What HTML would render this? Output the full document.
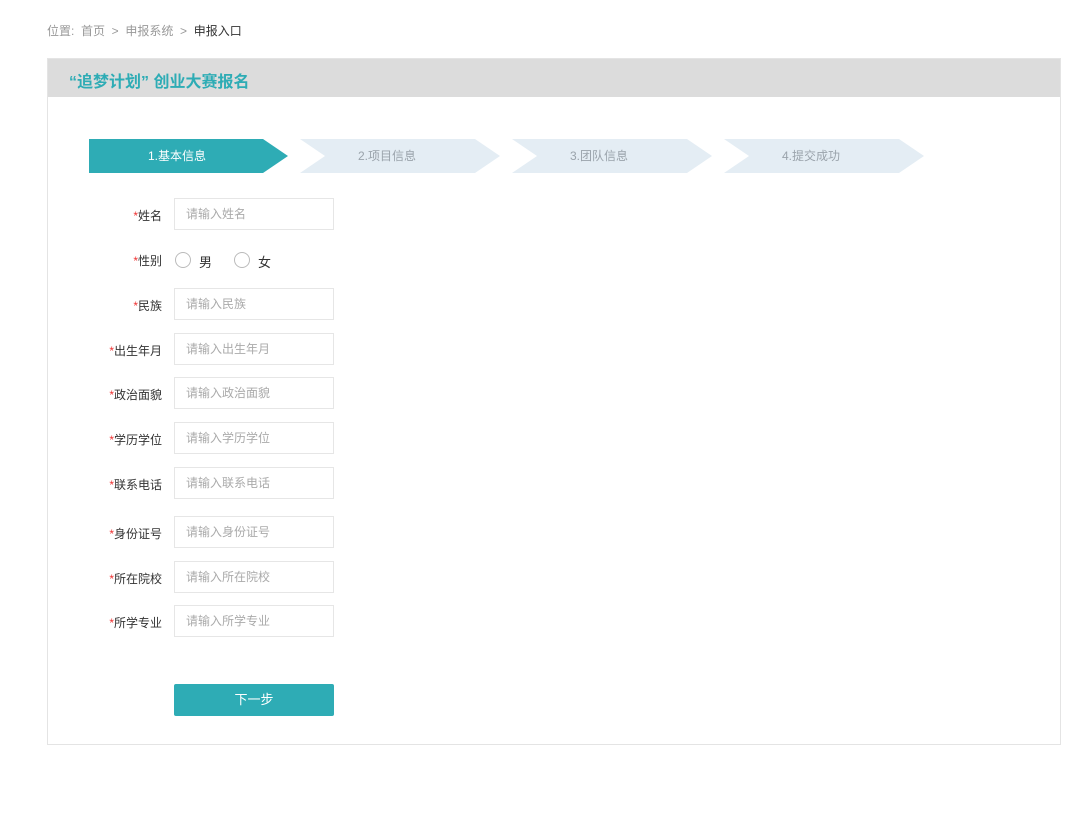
<!DOCTYPE html>
<html><head><meta charset="utf-8"><style>
body{margin:0;width:1080px;height:816px;background:#fff;font-family:"Liberation Sans","Noto Sans CJK SC",sans-serif;position:relative;overflow:hidden}
.a{position:absolute}
.crumb{left:47px;top:22px;font-size:12px;color:#999}
.crumb b{font-weight:normal;color:#333}
.panel{left:47px;top:58px;width:1014px;height:687px;border:1px solid #e4e4e4;box-sizing:border-box}
.head{left:48px;top:59px;width:1012px;height:38px;background:#dcdcdc}
.title{left:69px;top:68px;font-size:16px;font-weight:bold;color:#2eacb5}
.step{font-size:12px;top:147px;color:#9aa3ab}
.lbl{width:70px;left:92px;text-align:right;font-size:12px;color:#333}
.lbl i{font-style:normal;color:#e33}
.inp{left:174px;width:160px;height:32px;border:1px solid #e6e6e6;box-sizing:border-box;font-size:12px;color:#aaa;padding-left:11px;line-height:30px}
.rad{width:16px;height:16px;border:1px solid #bbb;border-radius:50%;box-sizing:border-box;top:252px}
.btn{left:174px;top:684px;width:160px;height:32px;background:#2eacb5;border-radius:2px;color:#fff;font-size:13px;text-align:center;line-height:32px}
</style></head><body>
<div class="a crumb">位置:&nbsp; 首页 &nbsp;&gt;&nbsp; 申报系统 &nbsp;&gt;&nbsp; <b>申报入口</b></div>
<div class="a panel"></div>
<div class="a head"></div>
<div class="a title">“追梦计划” 创业大赛报名</div>
<svg class="a" style="left:0;top:0" width="1080" height="200">
<polygon points="89,139 263,139 288,156 263,173 89,173" fill="#2eacb5"/>
<polygon points="300,139 475,139 500,156 475,173 300,173 325,156" fill="#e4edf4"/>
<polygon points="512,139 687,139 712,156 687,173 512,173 537,156" fill="#e4edf4"/>
<polygon points="724,139 899,139 924,156 899,173 724,173 749,156" fill="#e4edf4"/>
</svg>
<div class="a step" style="left:148px;color:#fff">1.基本信息</div>
<div class="a step" style="left:358px">2.项目信息</div>
<div class="a step" style="left:570px">3.团队信息</div>
<div class="a step" style="left:782px">4.提交成功</div>

<div class="a lbl" style="top:207px"><i>*</i>姓名</div><div class="a inp" style="top:198px">请输入姓名</div>
<div class="a lbl" style="top:252px"><i>*</i>性别</div>
<div class="a rad" style="left:175px"></div><div class="a" style="left:199px;top:252px;font-size:13px;color:#333">男</div>
<div class="a rad" style="left:234px"></div><div class="a" style="left:258px;top:252px;font-size:13px;color:#333">女</div>
<div class="a lbl" style="top:297px"><i>*</i>民族</div><div class="a inp" style="top:288px">请输入民族</div>
<div class="a lbl" style="top:342px"><i>*</i>出生年月</div><div class="a inp" style="top:333px">请输入出生年月</div>
<div class="a lbl" style="top:386px"><i>*</i>政治面貌</div><div class="a inp" style="top:377px">请输入政治面貌</div>
<div class="a lbl" style="top:431px"><i>*</i>学历学位</div><div class="a inp" style="top:422px">请输入学历学位</div>
<div class="a lbl" style="top:476px"><i>*</i>联系电话</div><div class="a inp" style="top:467px">请输入联系电话</div>
<div class="a lbl" style="top:525px"><i>*</i>身份证号</div><div class="a inp" style="top:516px">请输入身份证号</div>
<div class="a lbl" style="top:570px"><i>*</i>所在院校</div><div class="a inp" style="top:561px">请输入所在院校</div>
<div class="a lbl" style="top:614px"><i>*</i>所学专业</div><div class="a inp" style="top:605px">请输入所学专业</div>
<div class="a btn">下一步</div>
</body></html>
